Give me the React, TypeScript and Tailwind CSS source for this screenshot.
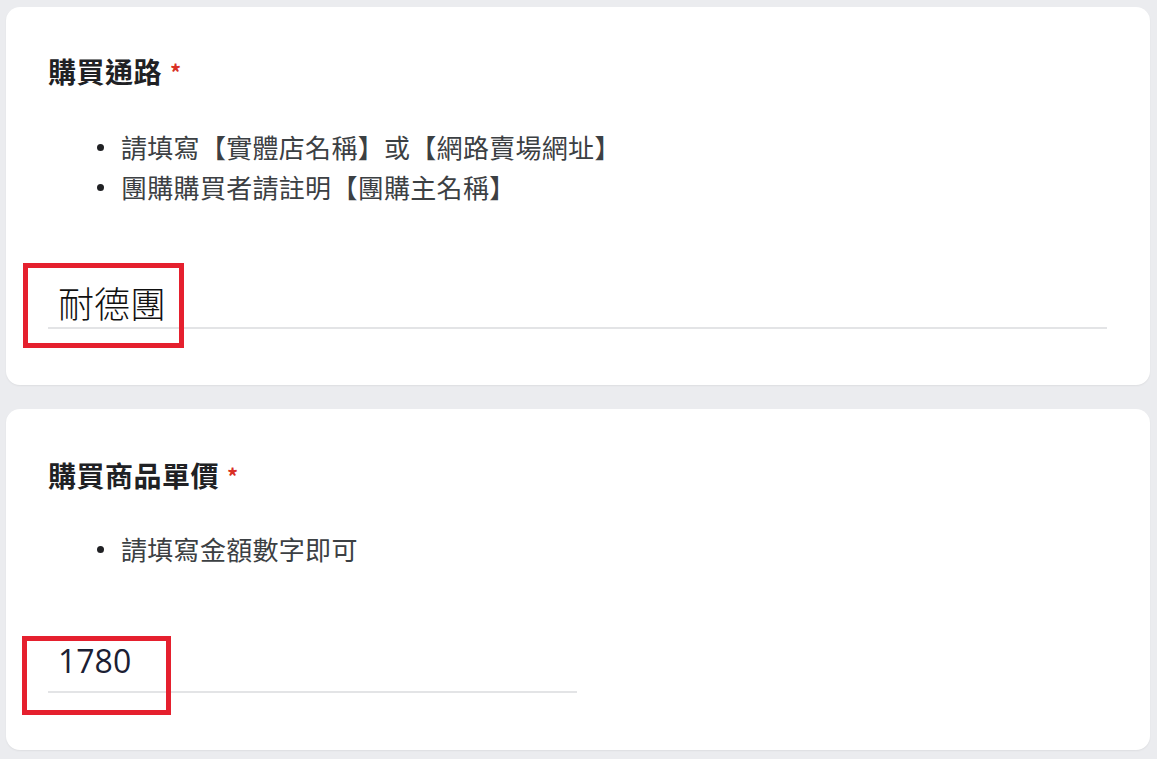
import React from "react";

const cjk = "font-['Noto_Sans_CJK_TC','Noto_Sans',sans-serif]";

function Bullet({ children }: { children: React.ReactNode }) {
  return (
    <li className="flex items-center h-[40px]">
      <span className="w-[7px] h-[7px] rounded-full bg-[#202124] ml-[49px] mr-[17px] shrink-0" />
      <span className="text-[26px] leading-[40px] tracking-[0.3px] text-[#3c4043]">{children}</span>
    </li>
  );
}

function Title({ children }: { children: React.ReactNode }) {
  return (
    <div className="flex items-center h-[28px]">
      <span className="text-[28px] leading-[28px] font-bold text-[#202124] tracking-[0.5px]">{children}</span>
      <span className="ml-[8px] text-[22px] leading-[28px] text-[#d93025] font-bold">*</span>
    </div>
  );
}

export default function App() {
  return (
    <div className={`w-[1157px] h-[759px] bg-[#ebecef] pl-[6px] pr-[7px] pt-[7px] flex flex-col gap-[24px] overflow-hidden ${cjk}`}>
      <div className="relative bg-white rounded-[14px] h-[378px] pl-[42px] pt-[50px] shadow-[0_1px_2px_rgba(0,0,0,0.06)]">
        <Title>購買通路</Title>
        <ul className="mt-[42px]">
          <Bullet>請填寫【實體店名稱】或【網路賣場網址】</Bullet>
          <Bullet>團購購買者請註明【團購主名稱】</Bullet>
        </ul>
        <div className="mt-[75px] w-[1059px] border-b-2 border-[#e3e4e6] pb-[5px]">
          <div className="pl-[10px] text-[36px] leading-[40px] font-light text-[#111]">耐德團</div>
        </div>
        <div className="absolute left-[17px] top-[256px] w-[161px] h-[85px] border-[5px] border-[#e5202e]" />
      </div>

      <div className="relative bg-white rounded-[14px] h-[341px] pl-[42px] pt-[52px] shadow-[0_1px_2px_rgba(0,0,0,0.06)]">
        <Title>購買商品單價</Title>
        <ul className="mt-[40px]">
          <Bullet>請填寫金額數字即可</Bullet>
        </ul>
        <div className="mt-[74px] w-[529px] border-b-2 border-[#e3e4e6] pb-[12px]">
          <div className="pl-[10px] text-[32px] leading-[36px] text-[#1b2033] font-['Open_Sans','Noto_Sans',sans-serif]">1780</div>
        </div>
        <div className="absolute left-[16px] top-[227px] w-[149px] h-[79px] border-[5px] border-[#e5202e]" />
      </div>
    </div>
  );
}
